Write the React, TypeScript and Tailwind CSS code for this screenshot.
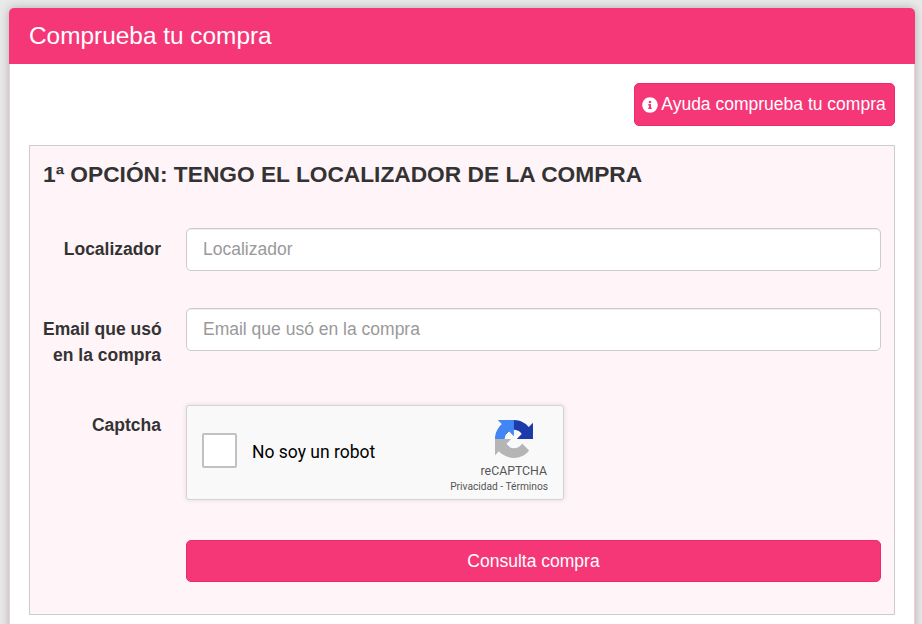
import { FaInfoCircle } from "react-icons/fa";

function Logo() {
  return (
    <svg viewBox="0 0 64 64" className="h-[38px] w-[38px]">
      <path d="M64 31.955l-.033-1.37V4.687l-7.16 7.16C50.948 4.674 42.033.093 32.05.093c-10.4 0-19.622 4.96-25.458 12.64l11.736 11.86a15.55 15.55 0 0 1 4.754-5.334c2.05-1.6 4.952-2.906 8.968-2.906.485 0 .86.057 1.135.163 4.976.393 9.288 3.14 11.828 7.124l-8.307 8.307L64 31.953" fill="#1c3aa9" />
      <path d="M31.862.094l-1.37.033H4.594l7.16 7.16C4.58 13.147 0 22.06 0 32.046c0 10.4 4.96 19.622 12.64 25.458L24.5 45.768a15.55 15.55 0 0 1-5.334-4.754c-1.6-2.05-2.906-4.952-2.906-8.968 0-.485.057-.86.163-1.135.393-4.976 3.14-9.288 7.124-11.828l8.307 8.307L31.86.094" fill="#4285f4" />
      <path d="M.001 32.045l.033 1.37v25.898l7.16-7.16c5.86 7.173 14.774 11.754 24.76 11.754 10.4 0 19.622-4.96 25.458-12.64l-11.736-11.86a15.55 15.55 0 0 1-4.754 5.334c-2.05 1.6-4.952 2.906-8.968 2.906-.485 0-.86-.057-1.135-.163-4.976-.393-9.288-3.14-11.828-7.124l8.307-8.307-27.295-.001" fill="#b5b5b5" />
    </svg>
  );
}

function Field({ label, lines, mt }: { label: string; lines: string[]; mt: string }) {
  return (
    <div className={`flex ${mt}`}>
      <label className="w-[118px] shrink-0 whitespace-nowrap pt-[8px] text-right text-[17.5px] font-bold leading-[26px] text-[#333]">
        {lines.map((l) => (
          <div key={l}>{l}</div>
        ))}
      </label>
      <input
        placeholder={label}
        className="ml-[25px] h-[43px] w-[695px] rounded-[5px] border border-[#ccc] bg-white px-4 text-[17.5px] text-[#555] shadow-[inset_0_1px_1px_rgba(0,0,0,0.075)] outline-none placeholder:text-[#999]"
      />
    </div>
  );
}

export default function App() {
  return (
    <div className="h-[624px] overflow-hidden bg-[#e9e9e9] pl-[9px] pt-2 font-['Liberation_Sans',Arial,sans-serif]">
      <div className="h-[640px] w-[906px] rounded-t-[5px] border-x border-[#f8c9d9] bg-white shadow-[0_0_10px_rgba(0,0,0,0.25)]">
        <div className="-mx-px flex h-[56px] items-center rounded-t-[5px] bg-[#f53778] pl-5 text-[24.4px] text-white">
          Comprueba tu compra
        </div>
        <div className="px-[19px] pt-[19px]">
          <div className="flex justify-end">
            <button className="flex h-[43px] w-[261px] items-center justify-center gap-[3px] rounded-[5px] border border-[#ee2a6c] bg-[#f53778] pr-px text-[17.5px] text-white">
              <FaInfoCircle className="h-[16px] w-[16px]" />
              Ayuda comprueba tu compra
            </button>
          </div>
          <div className="mt-[19px] h-[470px] w-[866px] border border-[#ccc] bg-[#fff4f8] pl-[13px] pt-[14px]">
            <h2 className="text-[22.72px] font-bold leading-[28px] text-[#333]">
              1ª OPCIÓN: TENGO EL LOCALIZADOR DE LA COMPRA
            </h2>
            <Field label="Localizador" lines={["Localizador"]} mt="mt-[40px]" />
            <Field label="Email que usó en la compra" lines={["Email que usó", "en la compra"]} mt="mt-[37px]" />
            <div className="mt-[37px] flex">
              <label className="w-[118px] shrink-0 pt-[7px] text-right text-[17.5px] font-bold leading-[26px] text-[#333]">
                Captcha
              </label>
              <div className="relative ml-[25px] flex h-[95px] w-[378px] items-center rounded-[3px] border border-[#d3d3d3] bg-[#f9f9f9] pl-[15px] shadow-[0_0_4px_1px_rgba(0,0,0,0.08)] font-['Roboto',sans-serif]">
                <div className="mb-[4px] h-[35px] w-[35px] rounded-[2px] border-2 border-[#c1c1c1] bg-white" />
                <span className="ml-[15px] text-[17.5px] text-black">No soy un robot</span>
                <div className="absolute right-[15px] top-[14px] flex flex-col items-end text-[#555]">
                  <div className="mr-[15px]">
                    <Logo />
                  </div>
                  <span className="mr-px mt-[5px] text-[12.3px] leading-[16px]">reCAPTCHA</span>
                  <span className="mt-px whitespace-nowrap text-[10.2px] leading-[14px]">Privacidad - Términos</span>
                </div>
              </div>
            </div>
            <div className="mt-[40px] pl-[143px]">
              <button className="h-[42px] w-[695px] rounded-[5px] border border-[#ee2a6c] bg-[#f53778] text-[17.5px] text-white">
                Consulta compra
              </button>
            </div>
          </div>
        </div>
      </div>
    </div>
  );
}
